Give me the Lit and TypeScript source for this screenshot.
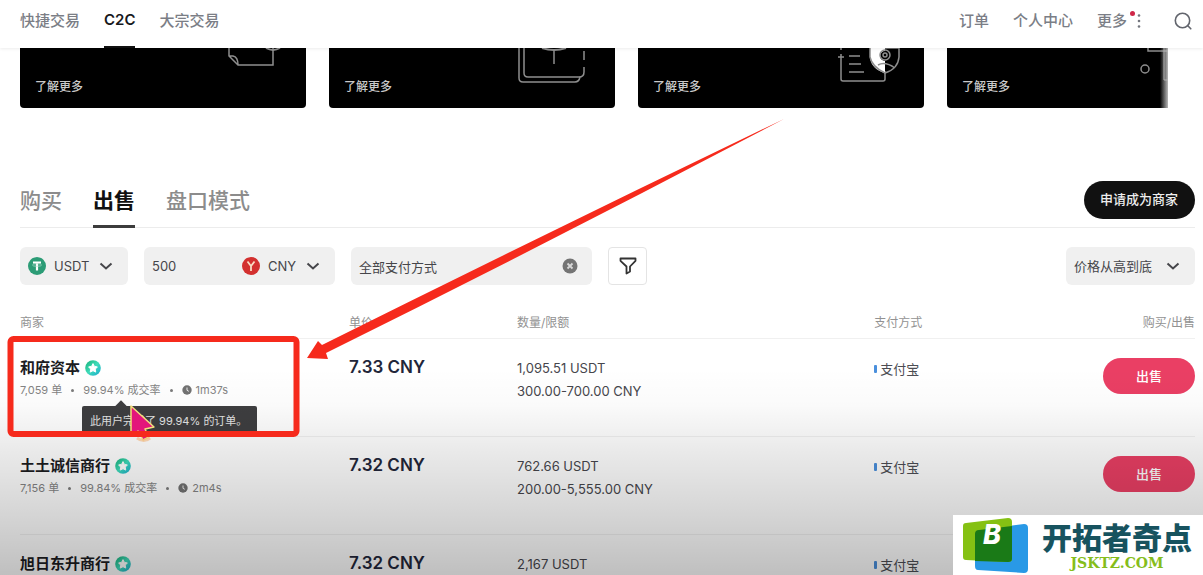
import { LitElement, html, svg, css, nothing } from "lit";
import { customElement, property } from "lit/decorators.js";

interface Offer {
  name: string;
  price: string;
  amount: string;
  orders?: string;
  rate?: string;
  time?: string;
  limit?: string;
  tip?: boolean;
}

const OFFERS: Offer[] = [
  { name: "和府资本", orders: "7,059", rate: "99.94%", time: "1m37s", price: "7.33 CNY", amount: "1,095.51 USDT", limit: "300.00-700.00 CNY", tip: true },
  { name: "土土诚信商行", orders: "7,156", rate: "99.84%", time: "2m4s", price: "7.32 CNY", amount: "762.66 USDT", limit: "200.00-5,555.00 CNY" },
  { name: "旭日东升商行", price: "7.32 CNY", amount: "2,167 USDT" },
];

const CARD_ART = [
  svg`<path d="M209 0v8l9 9h35V0M209 8h4q5 1 5 9"/><path d="M246 0q7 4 14 0" stroke-width="2"/>`,
  svg`<path d="M190 0v30q0 4 4 4h52q4 0 5-5"/><path d="M195 0v25q0 4 4 4h51q5 0 5-5v-5M255 3v9" /><path d="M213 0q12 4 24 0" stroke-width="2"/><path d="M225 1v15"/>`,
  svg`<path d="M203 0v2M200 9h6M203 6v25q0 2 2 2h40q2 0 2-2v-8"/><path d="M211 8h11M211 16h12M211 24h15"/>
      <path d="M232 0v9q1 12 15 16V13a5 5 0 0 1 0-10V0z" fill="#fff" stroke="none"/>
      <path d="M247 0h14v9q-1 12-14 16-13-6-15-16V0M240 17q7-4 17 3"/><circle cx="247" cy="7" r="5"/><circle cx="247" cy="7" r="2"/>`,
  svg`<path d="M201 0v3h24"/><circle cx="198" cy="21" r="4"/><path d="M217 0v32h10" stroke="#aaa" stroke-width="1"/>`,
];

const chevron = html`<svg class="chevron" viewBox="0 0 14 8" aria-hidden="true"><path d="M1.500 1.500 7 6.500l5.500-5" /></svg>`;

@customElement("offer-badge")
export class OfferBadge extends LitElement {
  static styles = css`
    :host { display: block; width: 16px; height: 16px; }
    svg { display: block; width: 100%; height: 100%; }
  `;
  render() {
    return html`<svg viewBox="0 0 16 16" aria-hidden="true">
      <defs><linearGradient id="g" x1="0" y1="0" x2="1" y2="1">
        <stop offset="0.1" stop-color="#1fb883" /><stop offset="0.5" stop-color="#3fdcba" /><stop offset="1" stop-color="#18a9cf" />
      </linearGradient></defs>
      <circle cx="8" cy="8" r="7.800" fill="url(#g)" />
      <path d="M8 3.600 9.400 6.400l3 .5-2.100 2.200.4 3L8 10.700l-2.700 1.400.4-3-2.100-2.200 3-.5z" fill="#fff" stroke="#fff" stroke-linejoin="round" />
    </svg>`;
  }
}

@customElement("site-header")
export class SiteHeader extends LitElement {
  static styles = css`
    :host { display: block; position: relative; z-index: 1; }
    .bar { display: flex; justify-content: space-between; height: 48px; padding: 0 10px 0 20px; background: #fff; box-shadow: 0 1px 3px rgba(0, 0, 0, 0.08); }
    nav { display: flex; gap: 24px; }
    a { display: flex; align-items: center; padding-bottom: 10px; box-sizing: border-box; height: 48px; font-size: 15px; font-weight: 500; color: #7b7e86; text-decoration: none; }
    .active { color: #17181c; font-weight: 600; border-bottom: 2px solid #111; padding-bottom: 8px; }
    .more { position: relative; }
    .more::after { content: ""; position: absolute; top: 11px; right: -8px; width: 5px; height: 5px; border-radius: 50%; background: #cf2748; }
    .right { display: flex; gap: 9px; }
    .tools { display: flex; align-items: center; gap: 31px; padding-bottom: 6px; }
    .tools button { display: block; padding: 0; border: 0; background: none; height: 20px; }
    .tools svg { display: block; }
  `;
  render() {
    return html`<header class="bar">
      <nav><a href="#quick">快捷交易</a><a class="active" href="#c2c">C2C</a><a href="#block">大宗交易</a></nav>
      <div class="right">
        <nav><a href="#orders">订单</a><a href="#me">个人中心</a><a class="more" href="#more">更多</a></nav>
        <div class="tools">
          <button aria-label="菜单"><svg width="6" height="20" viewBox="0 0 6 20" fill="#74777f"><circle cx="3" cy="4.500" r="1.300" /><circle cx="3" cy="10" r="1.300" /><circle cx="3" cy="15.500" r="1.300" /></svg></button>
          <button aria-label="搜索"><svg width="20" height="20" viewBox="0 0 20 20" fill="none" stroke="#62656d" stroke-width="1.600" stroke-linecap="round"><circle cx="9.500" cy="9.500" r="7.200" /><path d="m14.800 14.800 3 3" /></svg></button>
        </div>
      </div>
    </header>`;
  }
}

@customElement("offer-table")
export class OfferTable extends LitElement {
  @property({ attribute: false }) offers: Offer[] = [];
  static styles = css`
    :host { display: block; }
    table { width: 100%; table-layout: fixed; border-collapse: collapse; }
    th { height: 34px; padding: 0; font-size: 12px; font-weight: 400; color: #929292; text-align: left; border-bottom: 1px solid #f0f0f0; }
    .c-name { width: 28%; }
    .c-price { width: 14.3%; }
    .c-amount { width: 30.4%; }
    .end { text-align: right; }
    td { height: 98px; padding: 18px 0 0; vertical-align: top; border-bottom: 1px solid rgba(0, 0, 0, 0.06); box-sizing: border-box; }
    .name { display: flex; align-items: center; gap: 5px; font-size: 15px; line-height: 22px; font-weight: 700; color: #1c1c1f; }
    .meta { display: flex; align-items: center; position: relative; font-size: 11px; line-height: 22px; color: #848484; white-space: nowrap; }
    .dot { width: 3px; height: 3px; margin: 0 9px; border-radius: 50%; background: #7c7c7c; }
    .clock { width: 10px; height: 10px; margin-right: 4px; }
    .price { font-size: 17px; line-height: 20px; font-weight: 600; color: #22263a; }
    .amount { font-size: 13px; line-height: 23px; color: #46464c; }
    .pay { display: flex; align-items: center; gap: 3px; font-size: 13px; line-height: 24px; color: #4c4d53; }
    .pay::before { content: ""; width: 3px; height: 8px; border-radius: 1px; background: #4a8fdc; }
    .sell { width: 92px; height: 36px; margin-top: 1px; padding: 0 0 2px; border: 0; border-radius: 18px; background: #ea3f64; color: #fff; font: inherit; font-size: 13px; font-weight: 500; }
    .tip { position: absolute; left: 62px; top: 27px; z-index: 1; padding: 0 10px 0 8px; background: #3e3e40; color: #e4e4e4; line-height: 30px; border-radius: 2px; }
    .tip::before { content: ""; position: absolute; left: 35px; top: -4px; width: 8px; height: 8px; background: #3e3e40; transform: rotate(45deg); }
  `;
  render() {
    return html`<table>
      <thead><tr><th class="c-name">商家</th><th class="c-price">单价</th><th class="c-amount">数量/限额</th><th>支付方式</th><th class="end">购买/出售</th></tr></thead>
      <tbody>${this.offers.map((o) => html`<tr>
        <td>
          <div class="name">${o.name}<offer-badge></offer-badge></div>
          ${o.orders ? html`<div class="meta">
            <span>${o.orders} 单</span><i class="dot"></i><span>${o.rate} 成交率</span><i class="dot"></i>
            <svg class="clock" viewBox="0 0 10 10" aria-hidden="true"><circle cx="5" cy="5" r="4.700" fill="#727272" /><path d="M5 2.500v2.800l1.800 1" fill="none" stroke="#eee" /></svg><span>${o.time}</span>
            ${o.tip ? html`<div class="tip" role="tooltip">此用户完成了 ${o.rate} 的订单。</div>` : nothing}
          </div>` : nothing}
        </td>
        <td><div class="price">${o.price}</div></td>
        <td><div class="amount">${o.amount}</div>${o.limit ? html`<div class="amount">${o.limit}</div>` : nothing}</td>
        <td><div class="pay">支付宝</div></td>
        <td class="end">${o.limit ? html`<button class="sell">出售</button>` : nothing}</td>
      </tr>`)}</tbody>
    </table>`;
  }
}

@customElement("app-root")
export class AppRoot extends LitElement {
  static styles = css`
    :host { display: block; position: relative; height: 100vh; overflow: hidden; background: #fff; font-family: Inter, "Noto Sans CJK SC", sans-serif; }
    .cards { display: grid; grid-auto-flow: column; grid-auto-columns: 286px; gap: 23px; margin: 0 35px 0 20px; overflow: hidden; position: relative; }
    .cards::after { content: ""; position: absolute; right: 0; top: 0; bottom: 0; width: 8px; background: linear-gradient(90deg, transparent, #b8b8b8); }
    .card { display: grid; height: 60px; background: #000; border-radius: 0 0 4px 4px; text-decoration: none; color: #c9c9c9; font-size: 12px; font-weight: 500; }
    .card > * { grid-area: 1 / 1; }
    .card span { align-self: end; padding: 0 15px 12px; line-height: 18px; }
    .art { width: 286px; height: 60px; fill: none; stroke: #8e8e8e; stroke-width: 1.5; }
    main { padding: 72px 8px 0 20px; }
    .tabs { display: flex; align-items: center; justify-content: space-between; height: 47px; border-bottom: 1px solid #ececec; }
    .tablist { display: flex; gap: 31px; align-self: stretch; }
    .tab { height: 48px; padding: 0 0 8px; border: 0; border-bottom: 3px solid transparent; background: none; font: inherit; font-size: 21px; font-weight: 500; color: #8c8c8c; }
    .tab.on { color: #111; font-weight: 700; border-color: #3c3c3c; }
    .apply { height: 38px; margin-bottom: 8px; padding: 0 17px 2px 16px; border: 0; border-radius: 19px; background: #111; color: #eee; font: inherit; font-size: 13px; font-weight: 500; }
    .filters { display: flex; gap: 16px; margin: 19px 0; }
    .field { display: flex; align-items: center; height: 38px; box-sizing: border-box; padding: 0 8px; border-radius: 6px; background: #f0f0f0; color: #46464a; }
    .field input, .field select { appearance: none; min-width: 0; padding: 0; border: 0; outline: 0; background: none; font: inherit; font-size: 13px; color: inherit; }
    .coin { width: 18px; height: 18px; margin-right: 8px; flex: none; }
    .chevron { width: 14px; height: 8px; margin: 0 7px 0 9px; flex: none; fill: none; stroke: #46464a; stroke-width: 2; pointer-events: none; }
    .sum { width: 191px; }
    .sum input { flex: 1; }
    .method { width: 241px; }
    .method input { flex: 1; }
    .clear { display: block; padding: 0; border: 0; background: none; height: 16px; margin-right: 6px; }
    .funnel { display: grid; place-items: center; width: 39px; height: 38px; padding: 0; border: 1px solid #e4e4e4; border-radius: 4px; background: #fff; }
    .sort { margin-left: auto; gap: 4px; }
    .shade { position: absolute; inset: 64% 0 0; z-index: 2; pointer-events: none; background: linear-gradient(rgba(0, 0, 0, 0), rgba(0, 0, 0, 0.02) 18%, rgba(0, 0, 0, 0.08) 38%, rgba(0, 0, 0, 0.17) 72%, rgba(0, 0, 0, 0.25)); }
    .marks { position: absolute; left: 0; top: 0; z-index: 3; pointer-events: none; }
    .brand { position: absolute; right: 0; bottom: 0; z-index: 4; display: flex; align-items: center; gap: 13px; width: 250px; height: 60px; padding-left: 10px; box-sizing: border-box; background: #fff; }
    .logo { flex: none; width: 66px; height: 56px; }
    .words { display: grid; justify-items: center; }
    .title { font-size: 30px; line-height: 36px; font-weight: 900; color: #17535f; white-space: nowrap; }
    .site { font-family: "DejaVu Serif", serif; font-size: 14px; line-height: 14px; font-weight: 700; color: #85bd1b; }
    .letter { font: italic 800 27px Inter, sans-serif; fill: #fff; }
  `;
  render() {
    return html`
      <site-header></site-header>
      <div class="cards">${CARD_ART.map((a) => html`<a class="card" href="#learn"><svg class="art" viewBox="0 0 286 60" aria-hidden="true">${a}</svg><span>了解更多</span></a>`)}</div>
      <main>
        <div class="tabs">
          <div class="tablist" role="tablist">
            <button class="tab" role="tab">购买</button><button class="tab on" role="tab" aria-selected="true">出售</button><button class="tab" role="tab">盘口模式</button>
          </div>
          <button class="apply">申请成为商家</button>
        </div>
        <div class="filters">
          <label class="field">
            <svg class="coin" viewBox="0 0 18 18" aria-hidden="true"><circle cx="9" cy="9" r="9" fill="#2c9c76" /><path d="M5 5.500h8M9 5.500v8" stroke="#fff" stroke-width="2.200" /><ellipse cx="9" cy="8" rx="4.500" ry="1.300" fill="none" stroke="#b5dfd0" stroke-width=".7" /></svg>
            <select aria-label="币种"><option>USDT</option></select>${chevron}
          </label>
          <div class="field sum">
            <input aria-label="金额" value="500" />
            <svg class="coin" viewBox="0 0 18 18" aria-hidden="true"><circle cx="9" cy="9" r="9" fill="#d3302f" /><path d="m5.500 4.500 3.500 4.500 3.500-4.500M9 9v5" fill="none" stroke="#f9dcc4" stroke-width="1.800" /></svg>
            <select aria-label="法币"><option>CNY</option></select>${chevron}
          </div>
          <div class="field method">
            <input aria-label="支付方式" value="全部支付方式" />
            <button class="clear" aria-label="清除"><svg width="16" height="16" viewBox="0 0 16 16"><circle cx="8" cy="8" r="7.500" fill="#747474" /><path d="m5.500 5.500 5 5m0-5-5 5" stroke="#d8d8d8" stroke-width="1.800" /></svg></button>
          </div>
          <button class="funnel" aria-label="筛选"><svg width="18" height="18" viewBox="0 0 18 18" fill="none" stroke="#333" stroke-width="1.800" stroke-linejoin="round"><path d="M1.500 1.500h15v2.300L11 9.500v5l-3.500 2V9.500L1.500 3.800z" /></svg></button>
          <label class="field sort"><select aria-label="排序"><option>价格从高到底</option></select>${chevron}</label>
        </div>
        <offer-table .offers=${OFFERS}></offer-table>
      </main>
      <div class="shade"></div>
      <svg class="marks" width="800" height="450" viewBox="0 0 800 450" aria-hidden="true">
        <path d="M131 406v30l7-5 5 9 6-3-4-8 9-2z" fill="#e3157b" stroke="#f3df7c" stroke-width="1.500" stroke-linejoin="round" />
        <path d="M137 438q7 5 13 0" fill="none" stroke="#f0b27a" stroke-width="3" opacity=".6" />
        <rect x="10.500" y="339" width="286" height="95" rx="3" fill="none" stroke="#f62a1c" stroke-width="6" />
        <path d="M784 119Q553 230 322 345L318 341 307 358 328 359 326 353Q556 239 784 119z" fill="#f62a1c" />
      </svg>
      <div class="brand">
        <svg class="logo" viewBox="0 0 66 56" role="img" aria-label="B">
          <path d="M15 13 61 7q4 0 4 4v41q0 4-4 4l-46-3q-3 0-3-4V16q0-3 3-3z" fill="#2999e6" />
          <path d="M3 6 45 1q4 0 4 4v37q0 3-4 3L3 43q-3 0-3-3V9q0-3 3-3z" fill="#85c113" />
          <path d="M16 13 49 9v33q0 3-4 3l-33-1V17q0-4 4-4z" fill="#1a7a17" />
          <text class="letter" x="20" y="27">B</text>
        </svg>
        <div class="words"><span class="title">开拓者奇点</span><span class="site">JSKTZ.COM</span></div>
      </div>
    `;
  }
}
